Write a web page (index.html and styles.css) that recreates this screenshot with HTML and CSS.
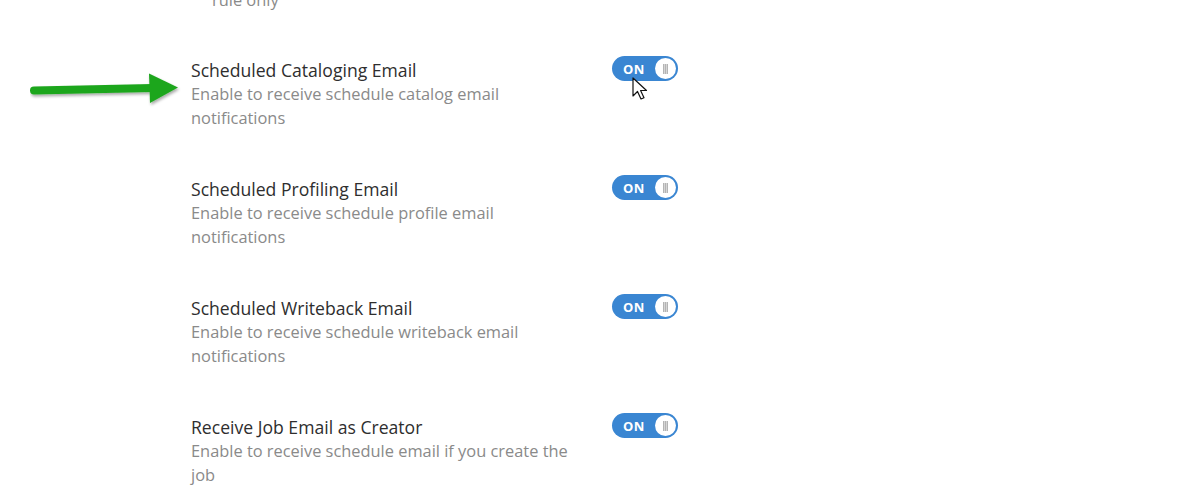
FILE: index.html
```html
<!DOCTYPE html>
<html>
<head>
<meta charset="utf-8">
<link rel="stylesheet" href="styles.css">
</head>
<body>
<div class="page">
  <div class="prev"><p class="desc indent">rule only</p></div>
  <div class="list">
    <div class="row">
      <div class="text">
        <h3 class="title">Scheduled Cataloging Email</h3>
        <p class="desc">Enable to receive schedule catalog email notifications</p>
      </div>
      <div class="toggle"><span class="on">ON</span><span class="knob"><span class="grip"></span></span></div>
      <svg class="cursor" width="17" height="24" viewBox="0 0 17 24"><path d="M1 1 L1 19 L5.5 14.5 L9 22 L12 20.7 L8.6 13.5 L14.5 13.5 Z" fill="#fff" stroke="#111" stroke-width="1.2" stroke-linejoin="round"/></svg>
      <svg class="arrow" width="160" height="40" viewBox="0 0 160 40">
        <defs><filter id="sh" x="-10%" y="-40%" width="120%" height="180%"><feDropShadow dx="1" dy="2" stdDeviation="1.6" flood-color="#000" flood-opacity="0.35"/></filter></defs>
        <g filter="url(#sh)">
          <path d="M4 20.5 L122 18" stroke="#1fa61f" stroke-width="8" stroke-linecap="round"/>
          <path d="M119 3.5 L148 17.5 L120 33 Z" fill="#1fa61f"/>
        </g>
      </svg>
    </div>
    <div class="row">
      <div class="text">
        <h3 class="title">Scheduled Profiling Email</h3>
        <p class="desc">Enable to receive schedule profile email notifications</p>
      </div>
      <div class="toggle"><span class="on">ON</span><span class="knob"><span class="grip"></span></span></div>
    </div>
    <div class="row">
      <div class="text">
        <h3 class="title">Scheduled Writeback Email</h3>
        <p class="desc">Enable to receive schedule writeback email notifications</p>
      </div>
      <div class="toggle"><span class="on">ON</span><span class="knob"><span class="grip"></span></span></div>
    </div>
    <div class="row">
      <div class="text">
        <h3 class="title">Receive Job Email as Creator</h3>
        <p class="desc">Enable to receive schedule email if you create the job</p>
      </div>
      <div class="toggle"><span class="on">ON</span><span class="knob"><span class="grip"></span></span></div>
    </div>
  </div>
</div>
</body>
</html>
```

FILE: styles.css
```css
html, body {
  margin: 0;
  padding: 0;
  background: #fff;
  overflow: hidden;
}
body {
  font-family: "Open Sans", "Liberation Sans", sans-serif;
  width: 1191px;
  height: 494px;
}
.page {
  padding-left: 191px;
}
.prev {
  margin-top: -12px;
}
.indent {
  padding-left: 21px;
}
.list {
  margin-top: 46px;
  display: flex;
  flex-direction: column;
  gap: 47px;
}
.row {
  position: relative;
  display: flex;
  align-items: flex-start;
}
.text {
  width: 421px;
}
.title {
  margin: 0;
  font-size: 17.6px;
  font-weight: 400;
  line-height: 24px;
  color: #2e2e2e;
}
.desc {
  margin: 0;
  width: 392px;
  font-size: 16.4px;
  line-height: 24px;
  color: #8a8a8a;
}
.toggle {
  margin-top: -2px;
  width: 66px;
  height: 25px;
  box-sizing: border-box;
  border-radius: 13px;
  background: #3a86d2;
  display: flex;
  align-items: center;
  justify-content: space-between;
  padding: 0 2px 0 11px;
}
.on {
  color: #fff;
  font-weight: 700;
  font-size: 13px;
  letter-spacing: 0.3px;
}
.knob {
  width: 21px;
  height: 21px;
  border-radius: 50%;
  background: #fff;
  display: flex;
  align-items: center;
  justify-content: center;
}
.grip {
  width: 5px;
  height: 10px;
  background: repeating-linear-gradient(90deg, #b4b4b4 0 1px, #d6d6d6 1px 2px);
}
.cursor {
  position: absolute;
  left: 441px;
  top: 19px;
}
.arrow {
  position: absolute;
  left: -161px;
  top: 12px;
}
```
